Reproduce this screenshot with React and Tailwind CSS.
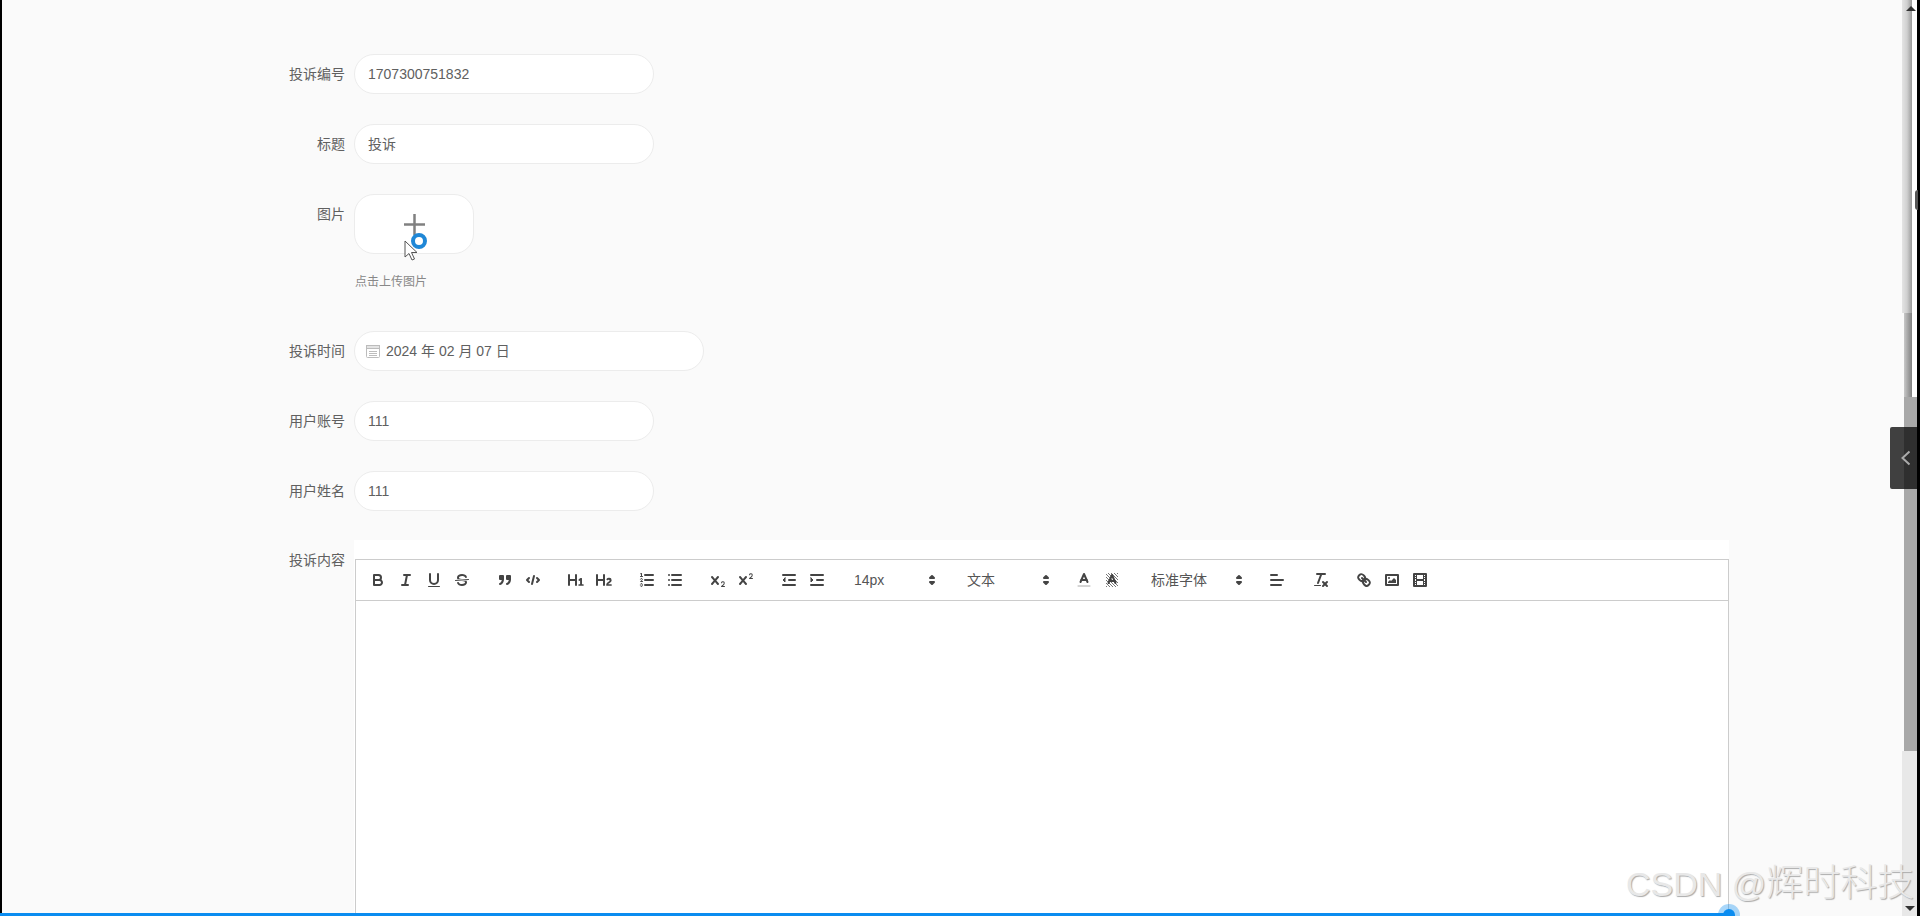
const S = ({ children, w = 18, className = "" }) => (
  <svg viewBox="0 0 18 18" width={w} height={w} className={"fill-none stroke-[#444] stroke-2 [stroke-linecap:round] [stroke-linejoin:round] " + className}>
    {children}
  </svg>
);
const T = { className: "stroke-1" };
const F = { className: "fill-[#444] stroke-0" };
const FS = { className: "fill-[#444] stroke-[#444] stroke-2" };

const icons = {
  bold: <S><path d="M5,4H9.5A2.5,2.5,0,0,1,12,6.5v0A2.5,2.5,0,0,1,9.5,9H5V4Z" /><path d="M5,9h5.5A2.5,2.5,0,0,1,13,11.5v0A2.5,2.5,0,0,1,10.5,14H5V9Z" /></S>,
  italic: <S><line x1="7" x2="13" y1="4" y2="4" /><line x1="5" x2="11" y1="14" y2="14" /><line x1="8" x2="10" y1="14" y2="4" /></S>,
  underline: <S><path d="M5,3V9a4.012,4.012,0,0,0,4,4H9a4.012,4.012,0,0,0,4-4V3" /><rect {...F} height="1" rx=".5" ry=".5" width="12" x="3" y="15" /></S>,
  strike: <S><line {...T} x1="15.5" x2="2.5" y1="8.5" y2="9.5" /><path {...F} d="M9.007,8C6.542,7.791,6,7.519,6,6.5,6,5.792,7.283,5,9,5c1.571,0,2.765.679,2.969,1.309a1,1,0,0,0,1.9-.617C13.356,4.106,11.354,3,9,3,6.2,3,4,4.538,4,6.5a3.2,3.2,0,0,0,.5,1.843Z" /><path {...F} d="M8.984,10C11.457,10.208,12,10.479,12,11.5c0,.708-1.283,1.5-3,1.5-1.571,0-2.765-.679-2.969-1.309a1,1,0,1,0-1.9.617C4.644,13.894,6.646,15,9,15c2.8,0,5-1.538,5-3.5a3.2,3.2,0,0,0-.5-1.843Z" /></S>,
  quote: <S><rect {...FS} height="3" width="3" x="4" y="5" /><rect {...FS} height="3" width="3" x="11" y="5" /><path {...FS} d="M7,8c0,4.031-3,5-3,5" /><path {...FS} d="M14,8c0,4.031-3,5-3,5" /></S>,
  code: <S><polyline points="5 7 3 9 5 11" /><polyline points="13 7 15 9 13 11" /><line x1="10" x2="8" y1="5" y2="13" /></S>,
  h1: <S><path {...F} d="M10,4V14a1,1,0,0,1-2,0V10H3v4a1,1,0,0,1-2,0V4A1,1,0,0,1,3,4V8H8V4a1,1,0,0,1,2,0Zm6.06787,9.209H14.98975V7.59863a.54085.54085,0,0,0-.605-.60547h-.62744a1.01119,1.01119,0,0,0-.748.29688L11.645,8.56641a.5435.5435,0,0,0-.022.8584l.28613.30762a.53861.53861,0,0,0,.84717.0332l.09912-.08789a1.2137,1.2137,0,0,0,.2417-.35254h.02246s-.01123.30859-.01123.60547V13.209H12.041a.54085.54085,0,0,0-.605.60547v.43945a.54085.54085,0,0,0,.605.60547h4.02686a.54085.54085,0,0,0,.605-.60547v-.43945A.54085.54085,0,0,0,16.06787,13.209Z" /></S>,
  h2: <S><path {...F} d="M16.73975,13.81445v.43945a.54085.54085,0,0,1-.605.60547H11.855a.58392.58392,0,0,1-.64893-.60547V14.0127c0-2.90527,3.39941-3.42187,3.39941-4.55469a.77675.77675,0,0,0-.84717-.78125,1.17684,1.17684,0,0,0-.83594.38477c-.2749.26367-.561.374-.85791.13184l-.4292-.34082c-.30811-.24219-.38525-.51758-.1543-.81445a2.97155,2.97155,0,0,1,2.45361-1.17676,2.45393,2.45393,0,0,1,2.68408,2.40918c0,2.45312-3.1792,2.92676-3.27832,3.93848h2.79443A.54085.54085,0,0,1,16.73975,13.81445ZM9,3A.99974.99974,0,0,0,8,4V8H3V4A1,1,0,0,0,1,4V14a1,1,0,0,0,2,0V10H8v4a1,1,0,0,0,2,0V4A.99974.99974,0,0,0,9,3Z" /></S>,
  ol: <S><line x1="7" x2="15" y1="4" y2="4" /><line x1="7" x2="15" y1="9" y2="9" /><line x1="7" x2="15" y1="14" y2="14" /><line {...T} x1="2.5" x2="4.5" y1="5.5" y2="5.5" /><path {...F} d="M3.5,6A0.5,0.5,0,0,1,3,5.5V3.085l-0.276.138A0.5,0.5,0,0,1,2.053,3c-0.124-.247-0.023-0.324.224-0.447l1-.5A0.5,0.5,0,0,1,4,2.5v3A0.5,0.5,0,0,1,3.5,6Z" /><path {...T} d="M4.5,10.5h-2c0-.234,1.85-1.076,1.85-2.234A0.959,0.959,0,0,0,2.5,8.156" /><path {...T} d="M2.5,14.846a0.959,0.959,0,0,0,1.85-.109A0.7,0.7,0,0,0,3.75,14a0.688,0.688,0,0,0,.6-0.736,0.959,0.959,0,0,0-1.85-.109" /></S>,
  ul: <S><line x1="6" x2="15" y1="4" y2="4" /><line x1="6" x2="15" y1="9" y2="9" /><line x1="6" x2="15" y1="14" y2="14" /><line x1="3" x2="3" y1="4" y2="4" /><line x1="3" x2="3" y1="9" y2="9" /><line x1="3" x2="3" y1="14" y2="14" /></S>,
  sub: <S><path {...F} d="M15.5,15H13.861a3.858,3.858,0,0,0,1.914-2.975,1.8,1.8,0,0,0-1.6-1.751A1.921,1.921,0,0,0,12.021,11.7a.50013.50013,0,1,0,.957.291h0a.914.914,0,0,1,1.053-.725.81.81,0,0,1,.744.762c0,1.076-1.16971,1.86982-1.93971,2.43082A1.45639,1.45639,0,0,0,12,15.5a.5.5,0,0,0,.5.5h3A.5.5,0,0,0,15.5,15Z" /><path {...F} d="M9.65,5.241a1,1,0,0,0-1.409.108L6,7.964,3.759,5.349A1,1,0,0,0,2.241,6.651L4.684,9.5,2.241,12.35A1,1,0,0,0,3.759,13.651L6,11.036l2.241,2.616a1,1,0,0,0,1.519-1.3L7.316,9.5,9.759,6.651A1,1,0,0,0,9.65,5.241Z" /></S>,
  sup: <S><path {...F} d="M15.5,7H13.861a4.015,4.015,0,0,0,1.914-2.975,1.8,1.8,0,0,0-1.6-1.751A1.922,1.922,0,0,0,12.021,3.7a.5.5,0,1,0,.957.291.917.917,0,0,1,1.053-.725.81.81,0,0,1,.744.762c0,1.077-1.164,1.925-1.934,2.486A1.423,1.423,0,0,0,12,7.5a.5.5,0,0,0,.5.5h3A.5.5,0,0,0,15.5,7Z" /><path {...F} d="M9.651,5.241a1,1,0,0,0-1.41.108L6,7.964,3.759,5.349A1,1,0,0,0,2.241,6.651L4.684,9.5,2.241,12.35A1,1,0,0,0,3.759,13.651L6,11.036l2.241,2.616a1,1,0,0,0,1.519-1.3L7.316,9.5,9.759,6.651A1,1,0,0,0,9.651,5.241Z" /></S>,
  outdent: <S><line x1="3" x2="15" y1="14" y2="14" /><line x1="3" x2="15" y1="4" y2="4" /><line x1="9" x2="15" y1="9" y2="9" /><polygon className="fill-[#444] stroke-[#444] stroke-1" points="5 7 5 11 3 9 5 7" /></S>,
  indent: <S><line x1="3" x2="15" y1="14" y2="14" /><line x1="3" x2="15" y1="4" y2="4" /><line x1="9" x2="15" y1="9" y2="9" /><polygon className="fill-[#444] stroke-[#444] stroke-1" points="3 7 3 11 5 9 3 7" /></S>,
  color: <S><line className="stroke-[#aaa] stroke-1" x1="3" x2="15" y1="15" y2="15" /><polyline points="5.5 11 9 3 12.5 11" /><line x1="11.63" x2="6.38" y1="9" y2="9" /></S>,
  background: (
    <S>
      <defs>
        <pattern id="hatch" width="3" height="3" patternUnits="userSpaceOnUse">
          <rect width="1" height="1" className="fill-[#777] stroke-0" />
          <rect x="1" y="1" width="1" height="1" className="fill-[#777] stroke-0" />
          <rect x="2" y="2" width="1" height="1" className="fill-[#777] stroke-0" />
        </pattern>
      </defs>
      <rect x="3" y="2" width="12" height="14" fill="url(#hatch)" className="stroke-0" />
      <polyline points="5.5 12 9 4 12.5 12" />
      <line x1="11.63" x2="6.38" y1="10" y2="10" />
    </S>
  ),
  align: <S><line x1="3" x2="15" y1="9" y2="9" /><line x1="3" x2="13" y1="14" y2="14" /><line x1="3" x2="9" y1="4" y2="4" /></S>,
  clean: <S><line x1="5" x2="13" y1="3" y2="3" /><line x1="6" x2="9.35" y1="12" y2="3" /><line x1="11" x2="15" y1="11" y2="15" /><line x1="15" x2="11" y1="11" y2="15" /><rect {...F} height="1" rx=".5" ry=".5" width="7" x="2" y="14" /></S>,
  link: <S><line x1="7" x2="11" y1="7" y2="11" /><path d="M8.9,4.577a3.476,3.476,0,0,1,.36,4.679A3.476,3.476,0,0,1,4.577,8.9C3.185,7.5,2.035,6.4,4.217,4.217S7.5,3.185,8.9,4.577Z" /><path d="M13.423,9.1a3.476,3.476,0,0,0-4.679-.36,3.476,3.476,0,0,0,.36,4.679c1.392,1.392,2.5,2.542,4.679.36S14.815,10.5,13.423,9.1Z" /></S>,
  image: <S><rect height="10" width="12" x="3" y="4" /><circle {...F} cx="6" cy="7" r="1" /><polyline {...F} points="5 12 5 11 7 9 8 10 11 7 13 9 13 12 5 12" /></S>,
  video: <S><rect height="12" width="12" x="3" y="3" /><rect {...F} height="12" width="1" x="5" y="3" /><rect {...F} height="12" width="1" x="12" y="3" /><rect {...F} height="2" width="8" x="5" y="8" /><rect {...F} height="1" width="3" x="3" y="5" /><rect {...F} height="1" width="3" x="3" y="7" /><rect {...F} height="1" width="3" x="3" y="10" /><rect {...F} height="1" width="3" x="3" y="12" /><rect {...F} height="1" width="3" x="12" y="5" /><rect {...F} height="1" width="3" x="12" y="7" /><rect {...F} height="1" width="3" x="12" y="10" /><rect {...F} height="1" width="3" x="12" y="12" /></S>,
};

const Btn = ({ i }) => <span className="flex h-6 w-7 items-center justify-center">{icons[i]}</span>;
const Group = ({ items }) => (
  <span className="mr-[15px] flex">{items.map((i) => <Btn key={i} i={i} />)}</span>
);
const Arrows = ({ className }) => (
  <svg viewBox="0 0 18 18" width="18" height="18" className={className}>
    <polygon points="7 11 9 13 11 11" className="fill-[#444] stroke-[#444] stroke-2 [stroke-linejoin:round]" />
    <polygon points="7 7 9 5 11 7" className="fill-[#444] stroke-[#444] stroke-2 [stroke-linejoin:round]" />
  </svg>
);

const Label = ({ children }) => (
  <div className="mr-[9px] h-10 w-[81px] text-right text-sm leading-10 text-[#606060]">{children}</div>
);
const Row = ({ label, children, last }) => (
  <div className={last ? "mb-[29px] flex" : "mb-[30px] flex"}>
    <Label>{label}</Label>
    {children}
  </div>
);
const Field = ({ children }) => (
  <div className="h-10 w-[300px] rounded-[20px] border border-[#ececec] bg-white pl-[13px] text-sm leading-[38px] text-[#606060]">
    {children}
  </div>
);

export default function App() {
  return (
    <div className="relative flex h-[916px] w-[1920px] overflow-hidden bg-[#fafafa] font-['Liberation_Sans','Noto_Sans_CJK_SC',sans-serif]">
      <div className="w-[2px] bg-black" />

      <main className="flex-1 pl-[262px] pt-[54px]">
        <Row label="投诉编号"><Field>1707300751832</Field></Row>
        <Row label="标题"><Field>投诉</Field></Row>
        <div className="mb-[30px] flex">
          <Label>图片</Label>
          <div>
            <div className="relative flex h-[60px] w-[120px] items-center justify-center rounded-[20px] border border-[#ececec] bg-white">
              <svg viewBox="0 0 21 21" width="21" height="21" className="stroke-[#808080] stroke-[2.5]">
                <line x1="0" x2="21" y1="10.5" y2="10.5" />
                <line x1="10.5" x2="10.5" y1="0" y2="21" />
              </svg>
              <svg viewBox="0 0 14 22" width="14" height="22" className="absolute left-[49px] top-[45px]">
                <path d="M1 1v16l4-3.5 3 6.5 2.5-1-3-6.5h5.5z" className="fill-white stroke-[#555] stroke-1" />
              </svg>
              <span className="absolute left-[56px] top-[38px] h-4 w-4 rounded-full border-[4px] border-[#1f87d6] bg-white" />
            </div>
            <div className="ml-px mt-[20px] h-[27px] text-xs leading-4 text-[#888]">点击上传图片</div>
          </div>
        </div>
        <Row label="投诉时间">
          <div className="flex h-10 w-[350px] items-center rounded-[20px] border border-[#ececec] bg-white pl-[11px] text-sm text-[#606060]">
            <svg viewBox="0 0 14 14" width="14" height="14" className="mr-[6px] fill-none stroke-[#bcbcbc]">
              <rect x="0.5" y="1.5" width="13" height="12" rx="1" />
              <rect x="0.5" y="1.5" width="13" height="3" className="fill-[#e4e4e4]" />
              <path d="M3 7.5h8M3 9.5h8M3 11.5h8" />
            </svg>
            2024 年 02 月 07 日
          </div>
        </Row>
        <Row label="用户账号"><Field>111</Field></Row>
        <Row label="用户姓名" last><Field>111</Field></Row>
        <div className="flex">
          <Label>投诉内容</Label>
          <div className="w-[1375px] bg-white pl-px pt-[19px]">
            <div className="flex h-[42px] items-center border border-[#ccc] pl-2 text-sm text-[#555]">
              <Group items={["bold", "italic", "underline", "strike"]} />
              <Group items={["quote", "code"]} />
              <Group items={["h1", "h2"]} />
              <Group items={["ol", "ul"]} />
              <Group items={["sub", "sup"]} />
              <Group items={["outdent", "indent"]} />
              <span className="flex w-[113px] items-center pl-2"><span className="flex-1">14px</span><Arrows className="mr-[18px]" /></span>
              <span className="flex w-[111px] items-center pl-2"><span className="flex-1">文本</span><Arrows className="mr-[15px]" /></span>
              <Group items={["color", "background"]} />
              <span className="ml-[2px] flex w-[120px] items-center pl-2"><span className="flex-1">标准字体</span><Arrows className="mr-[15px]" /></span>
              <span className="mr-4"><Btn i="align" /></span>
              <Group items={["clean"]} />
              <span className="flex"><Btn i="link" /><Btn i="image" /><Btn i="video" /></span>
            </div>
            <div className="h-[400px] border-x border-[#ccc] bg-white" />
          </div>
        </div>
      </main>

      {/* window scrollbars */}
      <div className="flex w-[15px] flex-col">
        <div className="relative flex h-[313px]">
          <div className="w-[10px] bg-gradient-to-r from-[#e4e4e4] via-[#d0d0d0] to-[#9a9a9a]" />
          <div className="flex-1 bg-white" />
          <span className="absolute left-[4px] top-[6px] h-0 w-0 border-x-[5px] border-b-[5px] border-x-transparent border-b-[#333]" />
        </div>
        <div className="flex h-[84px]">
          <div className="ml-[2px] w-[8px] bg-gradient-to-r from-[#c8c8c8] to-[#808080]" />
          <div className="flex-1 bg-white" />
        </div>
        <div className="ml-[2px] h-[354px] bg-[#a8a8a8]" />
        <div className="relative flex-1 bg-[#e8e8e8]">
          <span className="absolute bottom-[5px] left-[3px] h-0 w-0 border-x-[5px] border-t-[5px] border-x-transparent border-t-[#333]" />
        </div>
      </div>
      <div className="w-[3px] bg-black" />

      {/* overlays */}
      <span className="absolute left-[1915px] top-[190px] h-5 w-[3px] rounded-l-full bg-[#555]" />
      <div className="absolute left-[1890px] top-[427px] flex h-[62px] w-[27px] items-center overflow-hidden rounded-l-[2px]">
        <div className="h-full w-[14px] bg-[#404040]" />
        <div className="h-full flex-1 bg-[#2f2f2f]" />
        <svg viewBox="0 0 10 16" width="10" height="16" className="absolute left-[11px] top-[23px] fill-none stroke-[#aaa] stroke-2">
          <path d="M8.5 1.5 1.5 8l7 6.5" />
        </svg>
      </div>
      <div className="absolute left-[1626px] top-[861px] flex items-center whitespace-nowrap leading-[46px] text-[#e8e8e8] [text-shadow:1px_1px_1px_#aaa]">
        <span className="text-[34px]">CSDN @</span>
        <span className="text-[37px] font-light">辉时科技</span>
      </div>
      <div className="absolute bottom-0 left-0 h-[3px] w-[1729px] bg-[#0a8cf0]" />
      <span className="absolute left-[1718px] top-[904px] h-[22px] w-[22px] rounded-full bg-[#0a8cf0]/35" />
      <span className="absolute left-[1723px] top-[909px] h-3 w-3 rounded-full bg-[#0a8cf0]" />
    </div>
  );
}
